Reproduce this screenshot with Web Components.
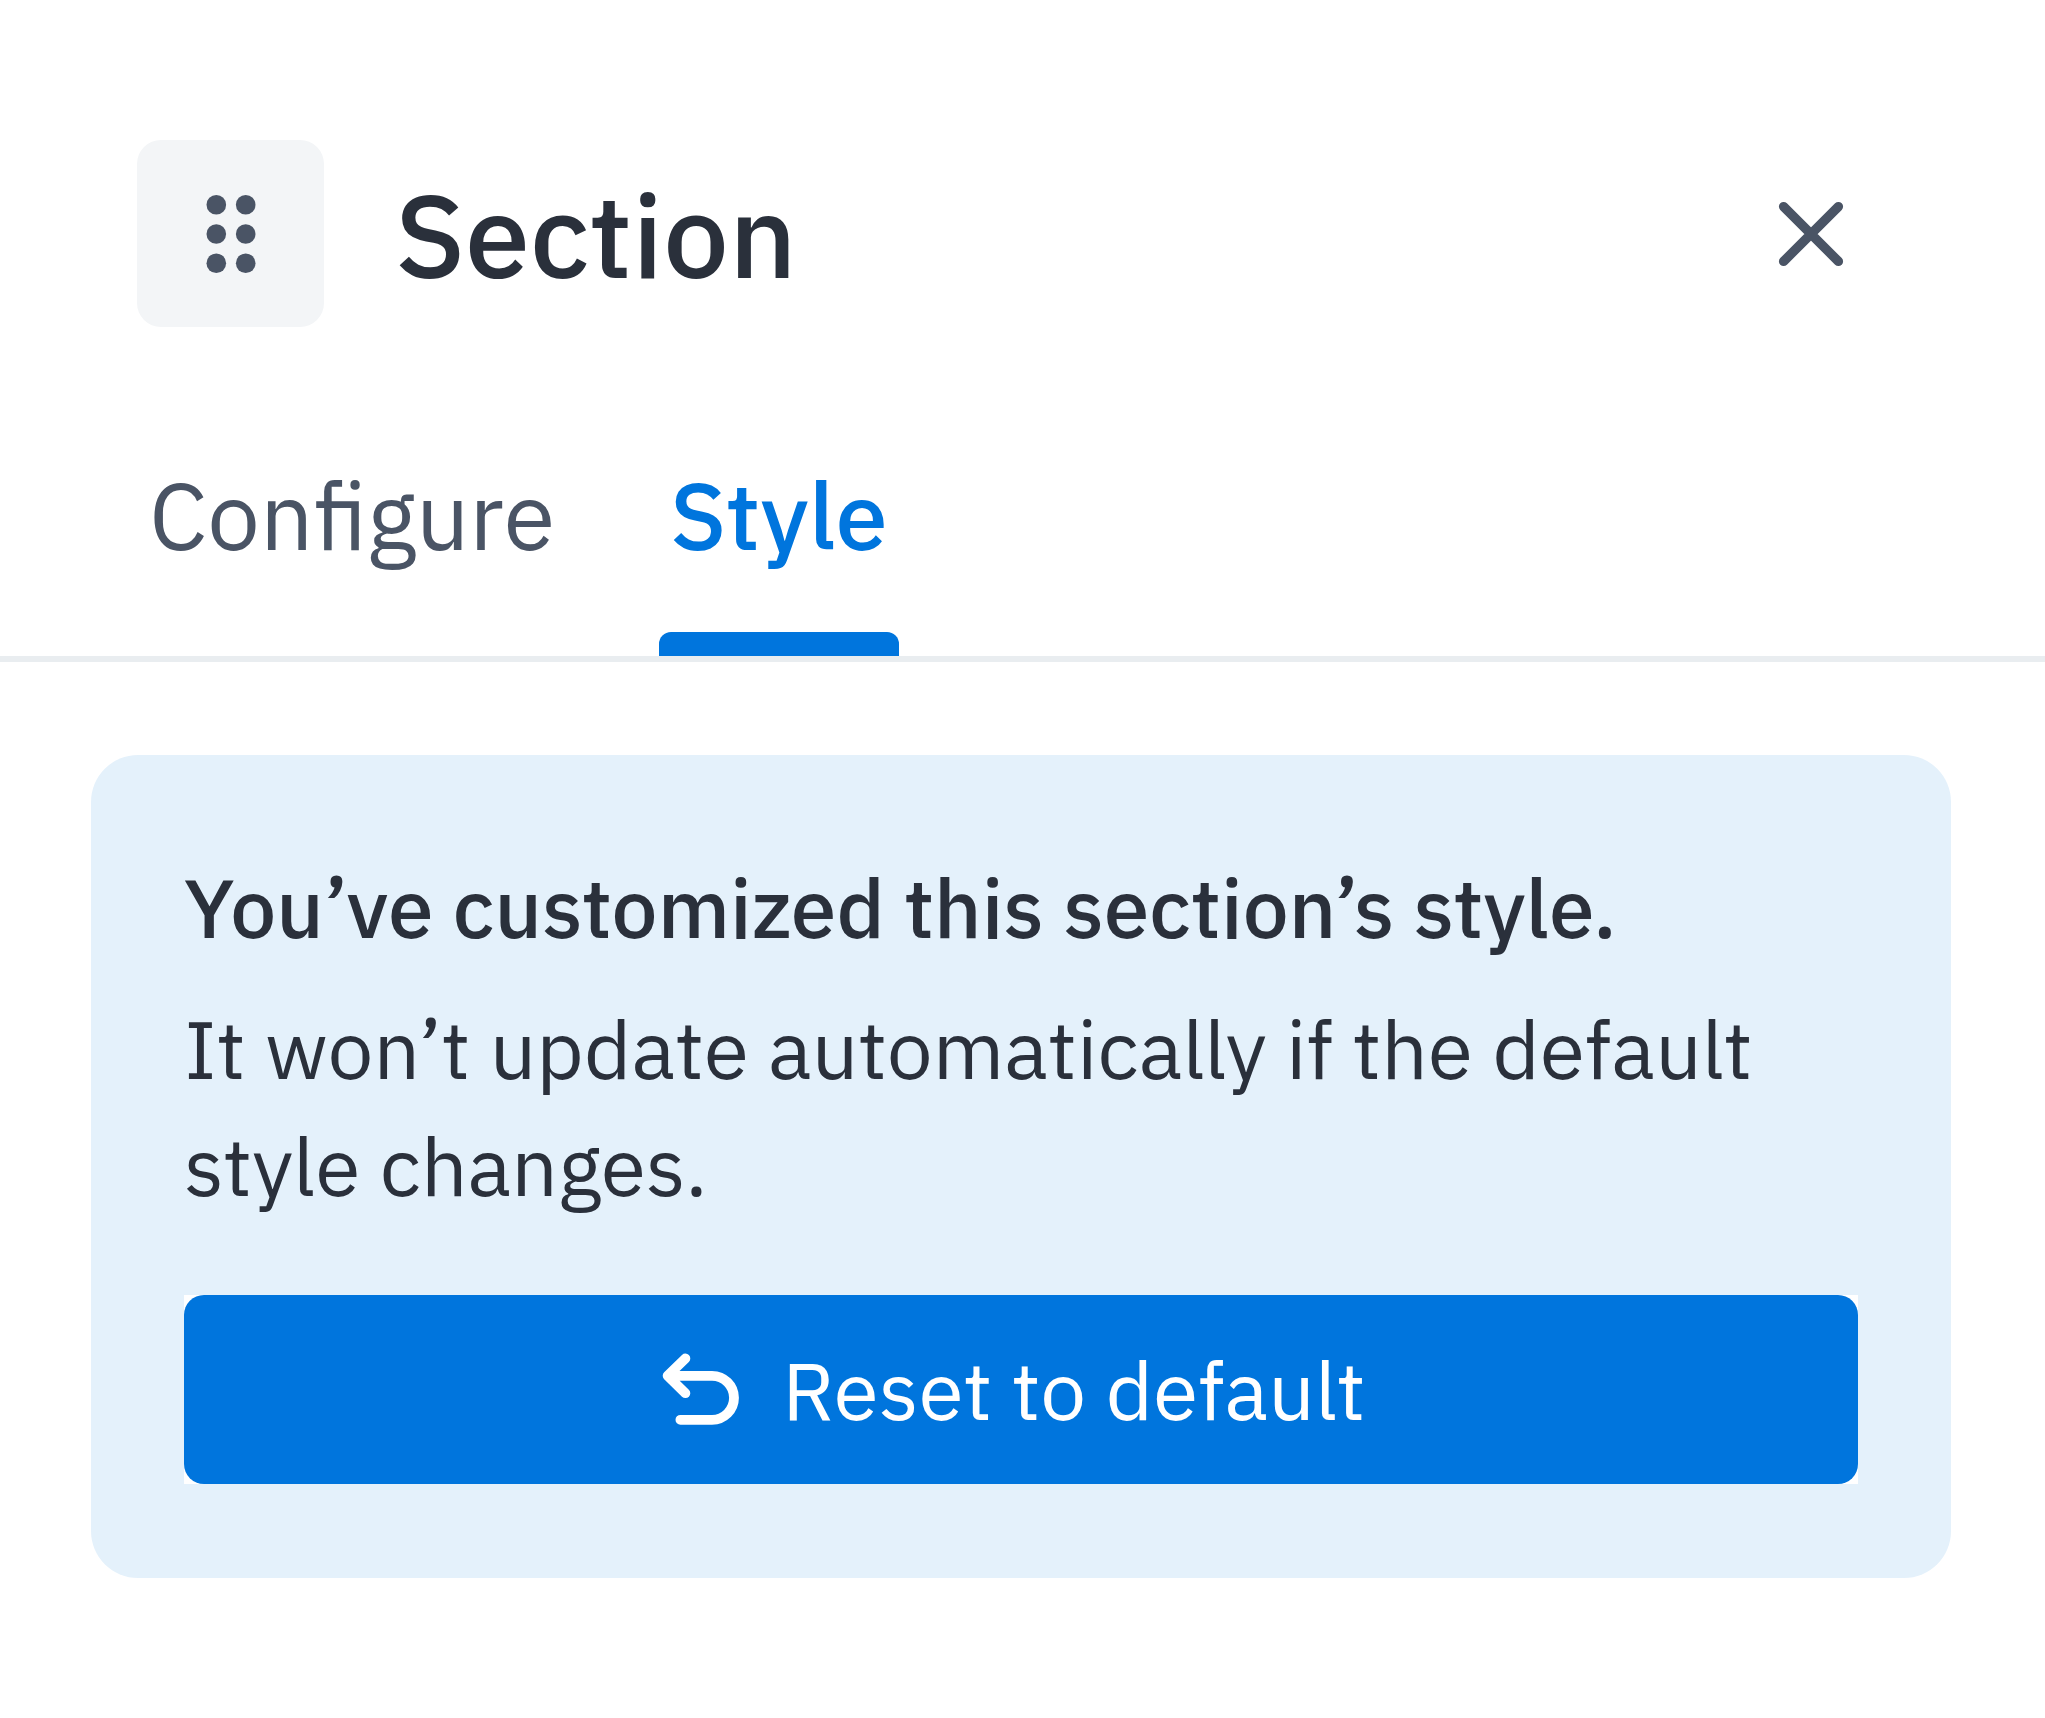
<!DOCTYPE html>
<html lang="en">
<head>
<meta charset="utf-8">
<meta name="viewport" content="width=device-width, initial-scale=1">
<title>Section</title>
<style>
  body {
    margin: 0;
    background: #fff;
    --ink: #2a303b;
    --muted: #4a5465;
    --accent: #0075dd;
    --text-body: 82px;
    --text-tab: 94px;
    --text-title: 117px;
    color: var(--ink);
    font-family: "IBM Plex Sans", "Noto Sans", sans-serif;
  }
</style>
</head>
<body>

<section-panel>
  <panel-header slot="header">Section</panel-header>
  <panel-tabs slot="tabs">
    <panel-tab>Configure</panel-tab>
    <panel-tab selected>Style</panel-tab>
  </panel-tabs>
  <notice-card>
    <span slot="heading">You’ve customized this section’s style.</span>
    It won’t update automatically if the default style changes.
    <reset-button slot="action">Reset to default</reset-button>
  </notice-card>
</section-panel>

<script>
function define(name, html, setup) {
  const template = document.createElement("template");
  template.innerHTML = html;

  window.customElements.define(
    name,
    class extends HTMLElement {
      constructor() {
        super();
        this.attachShadow({ mode: "open" });
        this.shadowRoot.appendChild(template.content.cloneNode(true));
      }

      connectedCallback() {
        if (setup) setup(this);
      }
    }
  );
}

define("section-panel", `
  <style>
    :host { display: block; }
    main { padding: 93px 94px 141px 91px; }
  </style>
  <slot name="header"></slot>
  <slot name="tabs"></slot>
  <main><slot></slot></main>
`);

define("panel-header", `
  <style>
    :host { display: block; padding: 140px 141px 0 137px; }
    header { display: flex; align-items: center; gap: 71px; }
    button {
      display: grid;
      place-items: center;
      width: 187px;
      height: 187px;
      padding: 0;
      border: 0;
      border-radius: 24px;
      background: none;
      color: var(--muted);
      cursor: pointer;
    }
    .grip { background: #f3f5f7; cursor: grab; }
    h1 {
      flex: 1;
      margin: 0;
      font-size: var(--text-title);
      line-height: 164px;
      font-weight: 500;
    }
  </style>
  <header>
    <button class="grip" type="button" aria-label="Move section">
      <svg width="50" height="80" viewBox="0 0 50 80" fill="currentColor" aria-hidden="true">
        <circle cx="10.3" cy="10.8" r="9.8"/><circle cx="39.7" cy="10.8" r="9.8"/>
        <circle cx="10.3" cy="40" r="9.8"/><circle cx="39.7" cy="40" r="9.8"/>
        <circle cx="10.3" cy="69.2" r="9.8"/><circle cx="39.7" cy="69.2" r="9.8"/>
      </svg>
    </button>
    <h1><slot></slot></h1>
    <button type="button" aria-label="Close">
      <svg width="66" height="66" viewBox="0 0 66 66" fill="none" stroke="currentColor" stroke-width="9.4" stroke-linecap="round" aria-hidden="true">
        <path d="M5.6 5.6 60.4 60.4M60.4 5.6 5.6 60.4"/>
      </svg>
    </button>
  </header>
`);

define("panel-tabs", `
  <style>
    :host { display: block; padding: 118px 138px 0; border-bottom: 6px solid #e9edf0; }
    nav { display: flex; gap: 93px; }
  </style>
  <nav role="tablist"><slot></slot></nav>
`);

define("panel-tab", `
  <style>
    :host { display: block; }
    button {
      display: block;
      padding: 0;
      border: 0;
      background: none;
      color: var(--muted);
      font: inherit;
      font-size: var(--text-tab);
      line-height: 141px;
      cursor: pointer;
    }
    .label { display: block; padding: 0 11px 46px; }
    .bar { display: block; height: 24px; border-radius: 12px 12px 0 0; }
    :host([selected]) button { color: var(--accent); font-weight: 500; }
    :host([selected]) .bar { background: var(--accent); }
  </style>
  <button type="button" role="tab">
    <span class="label"><slot></slot></span>
    <span class="bar"></span>
  </button>
`, function (tab) {
  const button = tab.shadowRoot.querySelector("button");
  button.setAttribute("aria-selected", tab.hasAttribute("selected"));
});

define("notice-card", `
  <style>
    :host {
      display: block;
      padding: 94px 93px;
      border-radius: 47px;
      background: #e4f1fb;
      font-size: var(--text-body);
      line-height: 117px;
    }
    h2 { margin: 0 0 24px; font: inherit; font-weight: 500; }
    p { margin: 0 0 71px; }
  </style>
  <h2><slot name="heading"></slot></h2>
  <p><slot></slot></p>
  <slot name="action"></slot>
`);

define("reset-button", `
  <style>
    :host { display: block; background: #fff; }
    button {
      display: flex;
      align-items: center;
      justify-content: center;
      gap: 42px;
      width: 100%;
      padding: 36px 14px 36px 0;
      border: 0;
      border-radius: 20px;
      background: var(--accent);
      color: #fff;
      font: inherit;
      cursor: pointer;
    }
  </style>
  <button type="button">
    <svg width="78" height="78" viewBox="0 0 78 78" fill="none" stroke="currentColor" stroke-width="9.8" stroke-linecap="round" stroke-linejoin="round" aria-hidden="true">
      <path d="M23.4 7.4 5.6 24.8 23.4 42.2M6 24.8H50a22 22 0 0 1 0 44H18.4"/>
    </svg>
    <span><slot></slot></span>
  </button>
`);
</script>
</body>
</html>
